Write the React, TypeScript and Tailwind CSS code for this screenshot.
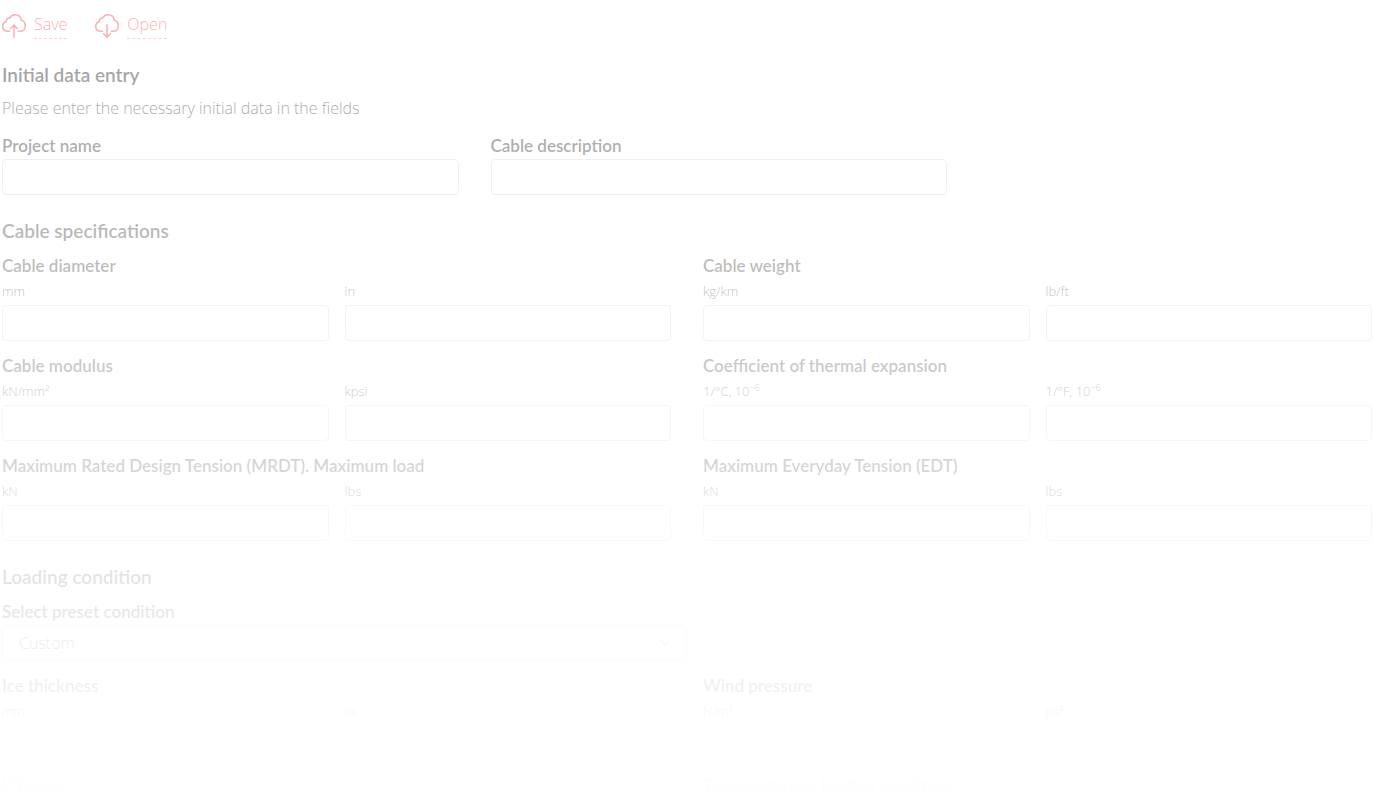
import type { ReactNode } from "react";

type Unit = { id: string; label: ReactNode };

const INPUT =
    "block h-9 w-full rounded border border-[#d8d8d8] bg-white px-4 font-['Open_Sans',sans-serif] text-base font-light outline-none focus:border-[#f26d6d]";
const LABEL = "block text-[17px] leading-6 font-semibold";

const TEN_POW = (
    <>
        10<sup className="top-[-5px] text-[9px]">−6</sup>
    </>
);

function CloudIcon({ direction }: { direction: "up" | "down" }) {
    return (
        <svg
            width="24"
            height="24"
            viewBox="0 0 24 24"
            fill="none"
            stroke="currentColor"
            strokeWidth="1.5"
            strokeLinecap="round"
            strokeLinejoin="round"
            aria-hidden
        >
            <path d="M7.6 17.3H5.2C2.6 17.1.7 15.1.7 12.6C.7 10 2.4 8.1 4.3 7.7C4 5.4 5.7 3.7 7.8 3.9C8.9 1.900 10.800.8 13 .8C16.400.8 18.900 3.100 19.300 6.300C21.700 6.900 23.300 9.200 23.300 11.700C23.300 14.900 21.200 17.200 18.400 17.300H16.400" />
            {direction === "up" ? (
                <path d="M12 23.200V11.300M8.600 14.500L12 11.100L15.400 14.500" />
            ) : (
                <path d="M12 10.800V22.800M8.600 19.800L12 23.200L15.400 19.800" />
            )}
        </svg>
    );
}

function FileLink({ direction, children }: { direction: "up" | "down"; children: ReactNode }) {
    return (
        <a href="#" className="flex gap-2 text-[#f25c5c]">
            <CloudIcon direction={direction} />
            <span className="border-b border-dashed border-[#ff9c9c] pb-1 font-['Open_Sans',sans-serif] text-base leading-5 font-light">
                {children}
            </span>
        </a>
    );
}

function SectionTitle({ children }: { children: ReactNode }) {
    return <h2 className="mb-[11px] text-[19px] leading-6 font-semibold">{children}</h2>;
}

function UnitGroup({ title, units }: { title: string; units: Unit[] }) {
    return (
        <fieldset className="min-w-0">
            <legend className={LABEL}>{title}</legend>
            <div className="grid grid-cols-2 gap-4">
                {units.map((unit) => (
                    <div key={unit.id}>
                        <label
                            htmlFor={unit.id}
                            className="mt-[3px] mb-1 block font-['Open_Sans',sans-serif] text-[13px] leading-5 font-light"
                        >
                            {unit.label}
                        </label>
                        <input id={unit.id} type="text" className={INPUT} />
                    </div>
                ))}
            </div>
        </fieldset>
    );
}

export default function App() {
    return (
        <main className="relative h-screen overflow-hidden bg-white font-['Lato',sans-serif] text-[#3a3a3a]">
            <form className="px-0.5">
                <div className="flex gap-7 pt-3.5 pb-6">
                    <FileLink direction="up">Save</FileLink>
                    <FileLink direction="down">Open</FileLink>
                </div>

                <SectionTitle>Initial data entry</SectionTitle>
                <p className="mb-4 font-['Open_Sans',sans-serif] text-base leading-5 font-light">
                    Please enter the necessary initial data in the fields
                </p>
                <div className="mb-6 grid max-w-[945px] grid-cols-2 gap-8">
                    <div>
                        <label htmlFor="project" className={`${LABEL} mb-px`}>
                            Project name
                        </label>
                        <input id="project" type="text" className={INPUT} />
                    </div>
                    <div>
                        <label htmlFor="description" className={`${LABEL} mb-px`}>
                            Cable description
                        </label>
                        <input id="description" type="text" className={INPUT} />
                    </div>
                </div>

                <SectionTitle>Cable specifications</SectionTitle>
                <div className="mb-6 grid grid-cols-2 gap-x-8 gap-y-[13px]">
                    <UnitGroup
                        title="Cable diameter"
                        units={[
                            { id: "diameter-mm", label: "mm" },
                            { id: "diameter-in", label: "in" },
                        ]}
                    />
                    <UnitGroup
                        title="Cable weight"
                        units={[
                            { id: "weight-kg", label: "kg/km" },
                            { id: "weight-lb", label: "lb/ft" },
                        ]}
                    />
                    <UnitGroup
                        title="Cable modulus"
                        units={[
                            { id: "modulus-kn", label: "kN/mm²" },
                            { id: "modulus-kpsi", label: "kpsi" },
                        ]}
                    />
                    <UnitGroup
                        title="Coefficient of thermal expansion"
                        units={[
                            { id: "expansion-c", label: <>1/°C, {TEN_POW}</> },
                            { id: "expansion-f", label: <>1/°F, {TEN_POW}</> },
                        ]}
                    />
                    <UnitGroup
                        title="Maximum Rated Design Tension (MRDT). Maximum load"
                        units={[
                            { id: "mrdt-kn", label: "kN" },
                            { id: "mrdt-lbs", label: "lbs" },
                        ]}
                    />
                    <UnitGroup
                        title="Maximum Everyday Tension (EDT)"
                        units={[
                            { id: "edt-kn", label: "kN" },
                            { id: "edt-lbs", label: "lbs" },
                        ]}
                    />
                </div>

                <SectionTitle>Loading condition</SectionTitle>
                <div className="mb-[13px] w-1/2">
                    <label htmlFor="preset" className={`${LABEL} mb-px`}>
                        Select preset condition
                    </label>
                    <div className="relative">
                        <select id="preset" className={`${INPUT} appearance-none`}>
                            <option>Custom</option>
                        </select>
                        <svg
                            className="pointer-events-none absolute top-3.5 right-4 h-2 w-3 text-[#8a8a8a]"
                            viewBox="0 0 12 8"
                            fill="none"
                            stroke="currentColor"
                            aria-hidden
                        >
                            <path d="M1.500 1.500L6 6L10.500 1.500" />
                        </svg>
                    </div>
                </div>
                <div className="grid grid-cols-2 gap-x-8 gap-y-[13px]">
                    <UnitGroup
                        title="Ice thickness"
                        units={[
                            { id: "ice-mm", label: "mm" },
                            { id: "ice-in", label: "in" },
                        ]}
                    />
                    <UnitGroup
                        title="Wind pressure"
                        units={[
                            { id: "wind-n", label: "N/m²" },
                            { id: "wind-psf", label: "psf" },
                        ]}
                    />
                    <h3 className={LABEL}>K factor</h3>
                    <h3 className={LABEL}>Temperature at loading condition</h3>
                </div>
            </form>

            {/* fades the form out towards the bottom */}
            <div className="pointer-events-none absolute inset-0 bg-linear-to-b from-white/50 to-white" />
        </main>
    );
}
